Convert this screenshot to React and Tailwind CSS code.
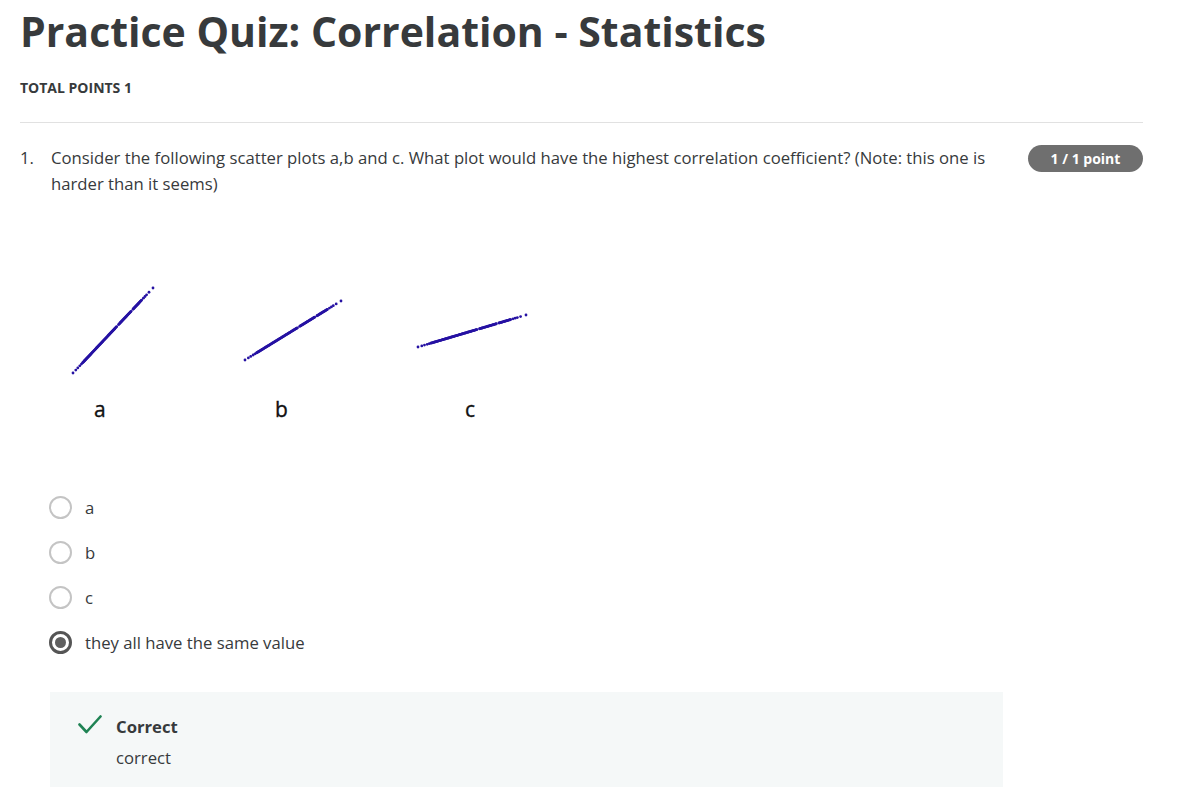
import React from "react";

function dotsFor(x1, y1, x2, y2) {
  const ts = [0, 0.035, 0.06, 0.085, 0.105];
  for (let t = 0.12; t <= 0.86; t += 0.006) {
    if ((t > 0.55 && t < 0.57) || (t > 0.73 && t < 0.745)) continue;
    ts.push(t);
  }
  ts.push(0.88, 0.9, 0.92, 0.95, 1);
  return ts.map((t, i) => ({
    cx: x1 + (x2 - x1) * t,
    cy: y1 + (y2 - y1) * t,
    key: i,
  }));
}

function Scatter() {
  const plots = [
    [23, 103, 103, 18],
    [195, 90, 291, 31],
    [368, 77, 476, 45],
  ];
  return (
    <svg width="520" height="160" viewBox="0 0 520 160" className="block">
      {plots.map((p, j) => (
        <g key={j} fill="#2612a3">
          {dotsFor(...p).map((d) => (
            <circle key={d.key} cx={d.cx} cy={d.cy} r="1.4" />
          ))}
        </g>
      ))}
      <g
        fill="#111"
        stroke="#111"
        strokeWidth="0.35"
        style={{ fontFamily: "'Open Sans', sans-serif" }}
        fontSize="21"
      >
        <text x="44" y="147">a</text>
        <text x="225" y="147">b</text>
        <text x="415" y="147">c</text>
      </g>
    </svg>
  );
}

function Radio({ checked }) {
  if (checked) {
    return (
      <span className="flex h-[23px] w-[23px] items-center justify-center rounded-full border-[3px] border-[#555555]">
        <span className="h-[11px] w-[11px] rounded-full bg-[#5f5f5f]" />
      </span>
    );
  }
  return <span className="block h-[23px] w-[23px] rounded-full border-2 border-[#c4c4c4]" />;
}

export default function App() {
  const options = [
    { label: "a" },
    { label: "b" },
    { label: "c" },
    { label: "they all have the same value", checked: true },
  ];
  return (
    <div
      className="min-h-[812px] bg-white text-[#373a3c]"
      style={{ fontFamily: "'Open Sans', 'Noto Sans', sans-serif" }}
    >
      <div className="pl-[20px] pr-[39px] pt-[7px]">
        <h1 className="text-[41px] font-bold leading-[48px] text-[#373a3c]">
          Practice Quiz: Correlation - Statistics
        </h1>
        <div className="mt-[24px] text-[14px] font-bold leading-[18px] text-[#373a3c]">
          TOTAL POINTS 1
        </div>
        <div className="mt-[25px] h-px bg-[#e1e1e1]" />
        <div className="mt-[22px] flex items-start">
          <div className="w-[31px] text-[16.7px] leading-[26px]">1.</div>
          <div className="flex-1 pr-[30px] text-[16.7px] leading-[26px]">
            Consider the following scatter plots a,b and c. What plot would have the highest
            correlation coefficient? (Note: this one is harder than it seems)
          </div>
          <div className="flex h-[27px] w-[115px] shrink-0 items-center justify-center rounded-full bg-[#6f6f6f] text-[14px] font-bold text-white">
            1 / 1 point
          </div>
        </div>
        <div className="ml-[30px] mt-[73px]">
          <Scatter />
        </div>
        <div className="ml-[29px] mt-[66px] flex flex-col gap-[22px]">
          {options.map((o) => (
            <div key={o.label} className="flex h-[23px] items-center gap-[13px]">
              <Radio checked={o.checked} />
              <span className="text-[16.7px] leading-[23px] text-[#373a3c]">{o.label}</span>
            </div>
          ))}
        </div>
        <div className="ml-[30px] mt-[38px] flex h-[95px] w-[953px] items-start bg-[#f5f8f8] pl-[28px] pt-[22px]">
          <svg width="24" height="20" viewBox="0 0 24 20" className="mt-[1px]">
            <polyline
              points="1.5,9.5 8.5,17 22.5,1.5"
              fill="none"
              stroke="#1f8354"
              strokeWidth="2.6"
              strokeLinecap="round"
              strokeLinejoin="round"
            />
          </svg>
          <div className="ml-[14px]">
            <div className="text-[16.7px] font-bold leading-[26px] text-[#373a3c]">Correct</div>
            <div className="mt-[7px] text-[16.7px] leading-[22px] text-[#373a3c]">correct</div>
          </div>
        </div>
      </div>
    </div>
  );
}
